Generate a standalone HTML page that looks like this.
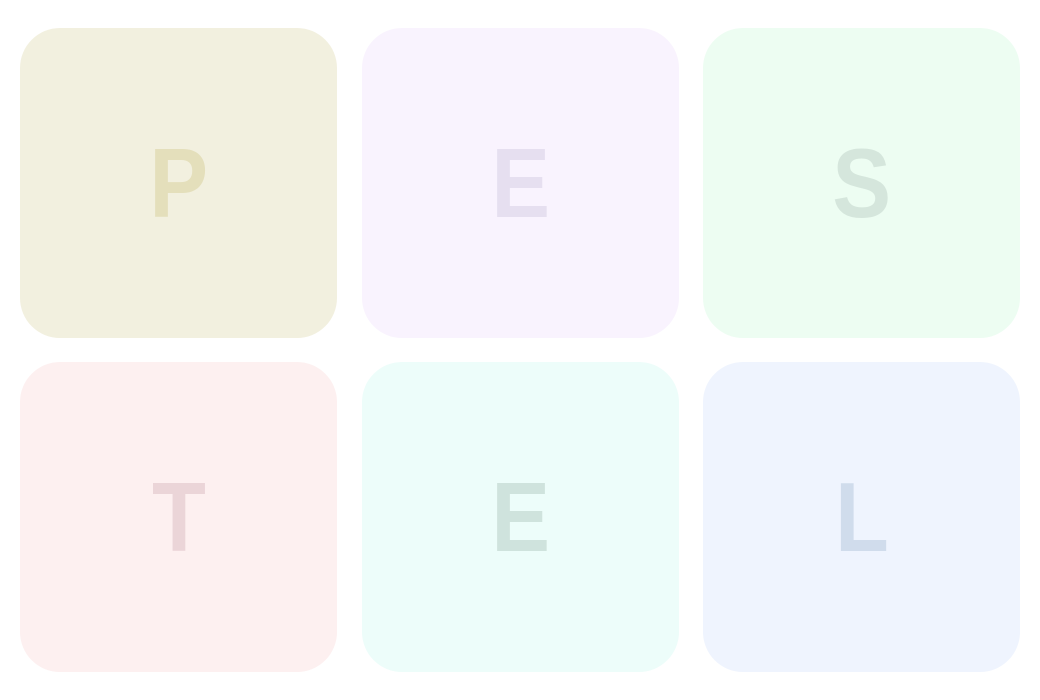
<!DOCTYPE html>
<html><head><style>
body{margin:0;width:1040px;height:700px;background:#fff;position:relative;overflow:hidden;font-family:"Liberation Sans",sans-serif}
.c{position:absolute;width:317px;height:310px;border-radius:40px;display:flex;align-items:center;justify-content:center;font-weight:bold;font-size:98px;line-height:1}
.c span{display:inline-block;transform:scaleX(0.9)}
</style></head><body>
<div class="c" style="left:20px;top:28px;background:#f2f0df;color:#e4dfbb"><span>P</span></div>
<div class="c" style="left:362px;top:28px;background:#f9f3fe;color:#e6dff0"><span>E</span></div>
<div class="c" style="left:703px;top:28px;background:#edfdf2;color:#d5e6dc"><span>S</span></div>
<div class="c" style="left:20px;top:362px;background:#fdf0f0;color:#ebd5d8"><span>T</span></div>
<div class="c" style="left:362px;top:362px;background:#edfdfa;color:#cfe3dd"><span>E</span></div>
<div class="c" style="left:703px;top:362px;background:#eff4fe;color:#d0dcec"><span>L</span></div>
</body></html>
